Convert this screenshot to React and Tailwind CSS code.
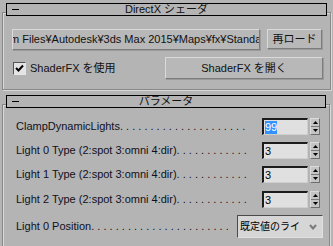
import React from "react";

const FONT = { fontFamily: '"Liberation Sans", "Noto Sans CJK JP", sans-serif' };

const DOTS = ". . . . . . . . . . . . . . . . . . . . . . . . . . . . . . . . . . . . . . . .";

function Header({ title, right = "mr-[6px]" }) {
  return (
    <div className={`relative z-10 mx-[6px] ${right} flex h-[13px] items-center border border-black bg-[#b4b4b4]`}>
      <div className="absolute left-[5px] top-[5px] h-[1px] w-[7px] bg-black" />
      <div className="w-full text-center text-[11px] leading-[11px] text-[#111]">{title}</div>
    </div>
  );
}

function Btn({ children, className = "" }) {
  return (
    <div
      className={`flex items-center justify-center border border-t-[#dadada] border-l-[#dadada] border-r-[#7c7c7c] border-b-[#7c7c7c] bg-[#b8b8b8] text-[11px] text-[#111] shadow-[1px_1px_0_#9a9a9a] ${className}`}
    >
      {children}
    </div>
  );
}

function Label({ text, w }) {
  return (
    <div className={`overflow-hidden whitespace-nowrap text-[11px] leading-[17px] text-[#10101c] ${w}`}>
      {text}
      {DOTS}
    </div>
  );
}

function Spinner({ value, selected }) {
  return (
    <div className="ml-[14px] flex h-[17px] items-stretch">
      <div className="flex w-[46px] items-center border-t-2 border-l-2 border-r border-b border-t-[#1c1c1c] border-l-[#1c1c1c] border-r-[#cfcfcf] border-b-[#cfcfcf] bg-[#e0e0e0] pl-[1px] text-[11px] leading-[13px] text-black">
        {selected ? <span className="bg-[#3392ff] text-white">{value}</span> : <span>{value}</span>}
      </div>
      <div className="ml-[2px] flex w-[10px] flex-col border border-t-[#dadada] border-l-[#dadada] border-r-[#6e6e6e] border-b-[#6e6e6e] bg-[#c4c4c4]">
        <div className="flex flex-1 items-center justify-center border-b border-b-[#7a7a7a]">
          <svg width="5" height="3" viewBox="0 0 5 3"><polygon points="2.5,0 5,3 0,3" fill="#000" /></svg>
        </div>
        <div className="flex flex-1 items-center justify-center">
          <svg width="5" height="3" viewBox="0 0 5 3"><polygon points="0,0 5,0 2.5,3" fill="#000" /></svg>
        </div>
      </div>
    </div>
  );
}

export default function App() {
  return (
    <div className="h-[246px] w-[333px] overflow-hidden bg-[#b4b4b4]" style={FONT}>
      {/* Rollout 1 */}
      <div className="pt-[3px]">
        <Header title="DirectX シェーダ" />
        <div className="mx-[2px] -mt-[4px] h-[78px] border border-[#888888] pt-[16px] shadow-[inset_1px_1px_0_#d8d8d8,1px_1px_0_#d8d8d8]">
          <div className="flex pl-[9px]">
            <div className="flex h-[21px] w-[248px] items-center overflow-hidden border border-t-[#dadada] border-l-[#dadada] border-r-[#7c7c7c] border-b-[#7c7c7c] bg-[#b8b8b8] shadow-[1px_1px_0_#9a9a9a]">
              <span className="ml-[-36px] whitespace-nowrap text-[11px] text-[#111]">
                Program Files¥Autodesk¥3ds Max 2015¥Maps¥fx¥StandardFX11.fx
              </span>
            </div>
            <Btn className="ml-[7px] h-[20px] w-[55px]">再ロード</Btn>
          </div>
          <div className="mt-[7px] flex items-center pl-[10px] pr-[7px]">
            <div className="flex h-[13px] w-[13px] items-center justify-center border border-t-[#555] border-l-[#555] border-r-[#e6e6e6] border-b-[#e6e6e6] bg-[#e4e4e4]">
              <svg width="9" height="9" viewBox="0 0 9 9">
                <polyline points="1,4 3.5,6.5 8,1.5" fill="none" stroke="#000" strokeWidth="2" />
              </svg>
            </div>
            <span className="ml-[4px] text-[11px] text-[#111]">ShaderFX を使用</span>
            <Btn className="ml-auto h-[22px] w-[158px]">ShaderFX を開く</Btn>
          </div>
        </div>
      </div>

      {/* Rollout 2 */}
      <div className="mt-[5px]">
        <Header title="パラメータ" right="mr-[7px]" />
        <div className="ml-[2px] mr-[3px] -mt-[4px] h-[160px] border border-[#888888] pl-[13px] pt-[13px] shadow-[inset_1px_1px_0_#d8d8d8,1px_1px_0_#d8d8d8]">
          <div className="flex flex-col gap-[7px]">
            <div className="flex items-center">
              <Label text="ClampDynamicLights" w="w-[232px]" />
              <Spinner value="99" selected />
            </div>
            <div className="flex items-center">
              <Label text="Light 0 Type (2:spot 3:omni 4:dir)" w="w-[232px]" />
              <Spinner value="3" />
            </div>
            <div className="flex items-center">
              <Label text="Light 1 Type (2:spot 3:omni 4:dir)" w="w-[232px]" />
              <Spinner value="3" />
            </div>
            <div className="mt-[1px] flex items-center">
              <Label text="Light 2 Type (2:spot 3:omni 4:dir)" w="w-[232px]" />
              <Spinner value="3" />
            </div>
            <div className="flex items-center">
              <Label text="Light 0 Position" w="w-[212px]" />
              <div className="ml-[9px] flex h-[23px] w-[86px] items-center border border-t-[#4a4a4a] border-l-[#4a4a4a] border-r-[#e0e0e0] border-b-[#e0e0e0] bg-[#d6d6d6] pl-[2px] text-black">
                <span className="whitespace-nowrap text-[10px]">既定値のライ</span>
                <svg className="ml-auto mr-[5px]" width="8" height="6" viewBox="0 0 8 6">
                  <polyline points="1,1 4,4.5 7,1" fill="none" stroke="#7a7a7a" strokeWidth="2" />
                </svg>
              </div>
            </div>
          </div>
        </div>
      </div>
    </div>
  );
}
